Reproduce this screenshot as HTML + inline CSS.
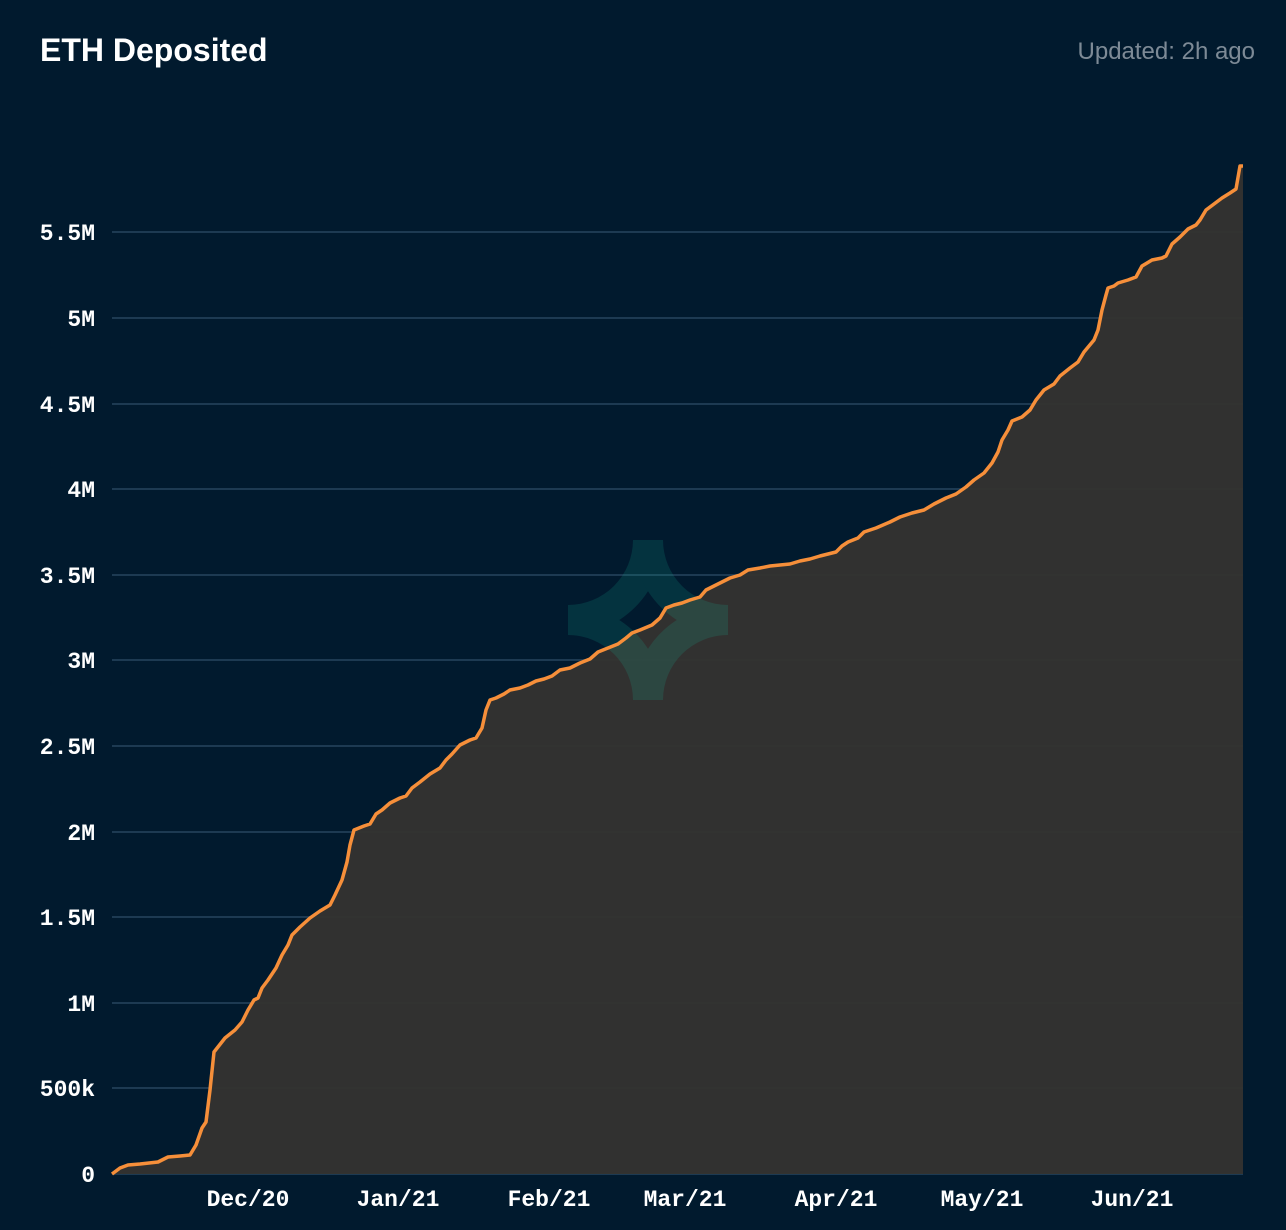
<!DOCTYPE html>
<html><head><meta charset="utf-8"><style>
html,body{margin:0;padding:0;background:#011a2e;width:1286px;height:1230px;overflow:hidden}
</style></head><body>
<svg width="1286" height="1230" viewBox="0 0 1286 1230" xmlns="http://www.w3.org/2000/svg">
<rect width="1286" height="1230" fill="#011a2e"/>
<text x="40" y="61" font-family="Liberation Sans, sans-serif" font-weight="bold" font-size="32" fill="#ffffff">ETH Deposited</text>
<text x="1255" y="59" text-anchor="end" font-family="Liberation Sans, sans-serif" font-size="24" fill="#7d8a96">Updated: 2h ago</text>
<g stroke="#1d3a52" stroke-width="2">
<line x1="112" x2="1243" y1="1088" y2="1088"/><line x1="112" x2="1243" y1="1003" y2="1003"/>
<line x1="112" x2="1243" y1="917" y2="917"/><line x1="112" x2="1243" y1="832" y2="832"/>
<line x1="112" x2="1243" y1="746" y2="746"/><line x1="112" x2="1243" y1="660" y2="660"/>
<line x1="112" x2="1243" y1="575" y2="575"/><line x1="112" x2="1243" y1="489" y2="489"/>
<line x1="112" x2="1243" y1="404" y2="404"/><line x1="112" x2="1243" y1="318" y2="318"/>
<line x1="112" x2="1243" y1="232" y2="232"/><line x1="112" x2="1243" y1="1174" y2="1174"/>
</g>
<polygon fill="#333331" fill-opacity="0.97" points="112,1174 120,1168 128,1165 140,1164 158,1162 168,1157 180,1156 190,1155 196,1145 202,1128 206,1122 210,1090 214,1052 225,1038 235,1030 242,1022 248,1010 254,1000 258,998 262,988 268,980 276,968 282,955 288,945 292,935 300,927 310,918 320,911 330,905 335,895 342,880 347,862 350,845 354,830 364,826 370,824 376,814 382,810 390,803 400,798 406,796 412,788 420,782 430,774 440,768 446,760 452,754 460,745 470,740 476,738 482,728 486,710 490,700 496,698 504,694 510,690 520,688 528,685 536,681 544,679 552,676 560,670 570,668 580,663 590,659 598,652 608,648 618,644 626,638 632,633 640,630 652,625 660,618 666,608 674,605 682,603 690,600 700,597 706,590 714,586 722,582 730,578 740,575 748,570 760,568 770,566 790,564 800,561 810,559 820,556 836,552 842,546 848,542 858,538 864,532 876,528 890,522 900,517 912,513 924,510 934,504 946,498 956,494 966,487 974,480 984,473 992,463 998,452 1002,440 1008,430 1012,421 1022,417 1030,410 1036,400 1044,390 1054,384 1060,376 1070,368 1078,362 1084,352 1094,340 1098,330 1102,310 1106,295 1108,288 1114,286 1118,283 1128,280 1136,277 1142,266 1152,260 1162,258 1166,256 1172,244 1180,237 1188,229 1196,225 1200,220 1206,210 1214,204 1222,198 1230,193 1236,189 1240,166 1243,166 1243,1174"/>
<defs><clipPath id="c"><rect x="568" y="540" width="160" height="160"/></clipPath></defs>
<g clip-path="url(#c)" opacity="0.16" fill="#14b89a">
<path d="M568,445 A95,95 0 0 1 568,635 A95,95 0 0 1 568,445 Z M568,475 A65,65 0 0 0 568,605 A65,65 0 0 0 568,475 Z" fill-rule="evenodd"/>
<path d="M728,445 A95,95 0 0 1 728,635 A95,95 0 0 1 728,445 Z M728,475 A65,65 0 0 0 728,605 A65,65 0 0 0 728,475 Z" fill-rule="evenodd"/>
<path d="M568,605 A95,95 0 0 1 568,795 A95,95 0 0 1 568,605 Z M568,635 A65,65 0 0 0 568,765 A65,65 0 0 0 568,635 Z" fill-rule="evenodd"/>
<path d="M728,605 A95,95 0 0 1 728,795 A95,95 0 0 1 728,605 Z M728,635 A65,65 0 0 0 728,765 A65,65 0 0 0 728,635 Z" fill-rule="evenodd"/>
</g>
<polyline fill="none" stroke="#f68f3a" stroke-width="3.5" stroke-linejoin="round" points="112,1174 120,1168 128,1165 140,1164 158,1162 168,1157 180,1156 190,1155 196,1145 202,1128 206,1122 210,1090 214,1052 225,1038 235,1030 242,1022 248,1010 254,1000 258,998 262,988 268,980 276,968 282,955 288,945 292,935 300,927 310,918 320,911 330,905 335,895 342,880 347,862 350,845 354,830 364,826 370,824 376,814 382,810 390,803 400,798 406,796 412,788 420,782 430,774 440,768 446,760 452,754 460,745 470,740 476,738 482,728 486,710 490,700 496,698 504,694 510,690 520,688 528,685 536,681 544,679 552,676 560,670 570,668 580,663 590,659 598,652 608,648 618,644 626,638 632,633 640,630 652,625 660,618 666,608 674,605 682,603 690,600 700,597 706,590 714,586 722,582 730,578 740,575 748,570 760,568 770,566 790,564 800,561 810,559 820,556 836,552 842,546 848,542 858,538 864,532 876,528 890,522 900,517 912,513 924,510 934,504 946,498 956,494 966,487 974,480 984,473 992,463 998,452 1002,440 1008,430 1012,421 1022,417 1030,410 1036,400 1044,390 1054,384 1060,376 1070,368 1078,362 1084,352 1094,340 1098,330 1102,310 1106,295 1108,288 1114,286 1118,283 1128,280 1136,277 1142,266 1152,260 1162,258 1166,256 1172,244 1180,237 1188,229 1196,225 1200,220 1206,210 1214,204 1222,198 1230,193 1236,189 1240,166 1243,166"/>
<g font-family="Liberation Mono, monospace" font-weight="600" font-size="23" fill="#ffffff" text-anchor="end">
<text x="95" y="1182">0</text><text x="95" y="1096">500k</text><text x="95" y="1011">1M</text>
<text x="95" y="925">1.5M</text><text x="95" y="840">2M</text><text x="95" y="754">2.5M</text>
<text x="95" y="668">3M</text><text x="95" y="583">3.5M</text><text x="95" y="497">4M</text>
<text x="95" y="412">4.5M</text><text x="95" y="326">5M</text><text x="95" y="240">5.5M</text>
</g>
<g font-family="Liberation Mono, monospace" font-weight="600" font-size="23" fill="#ffffff" text-anchor="middle">
<text x="248" y="1206">Dec/20</text><text x="398" y="1206">Jan/21</text><text x="549" y="1206">Feb/21</text>
<text x="685" y="1206">Mar/21</text><text x="836" y="1206">Apr/21</text><text x="982" y="1206">May/21</text>
<text x="1132" y="1206">Jun/21</text>
</g>
</svg>
</body></html>
